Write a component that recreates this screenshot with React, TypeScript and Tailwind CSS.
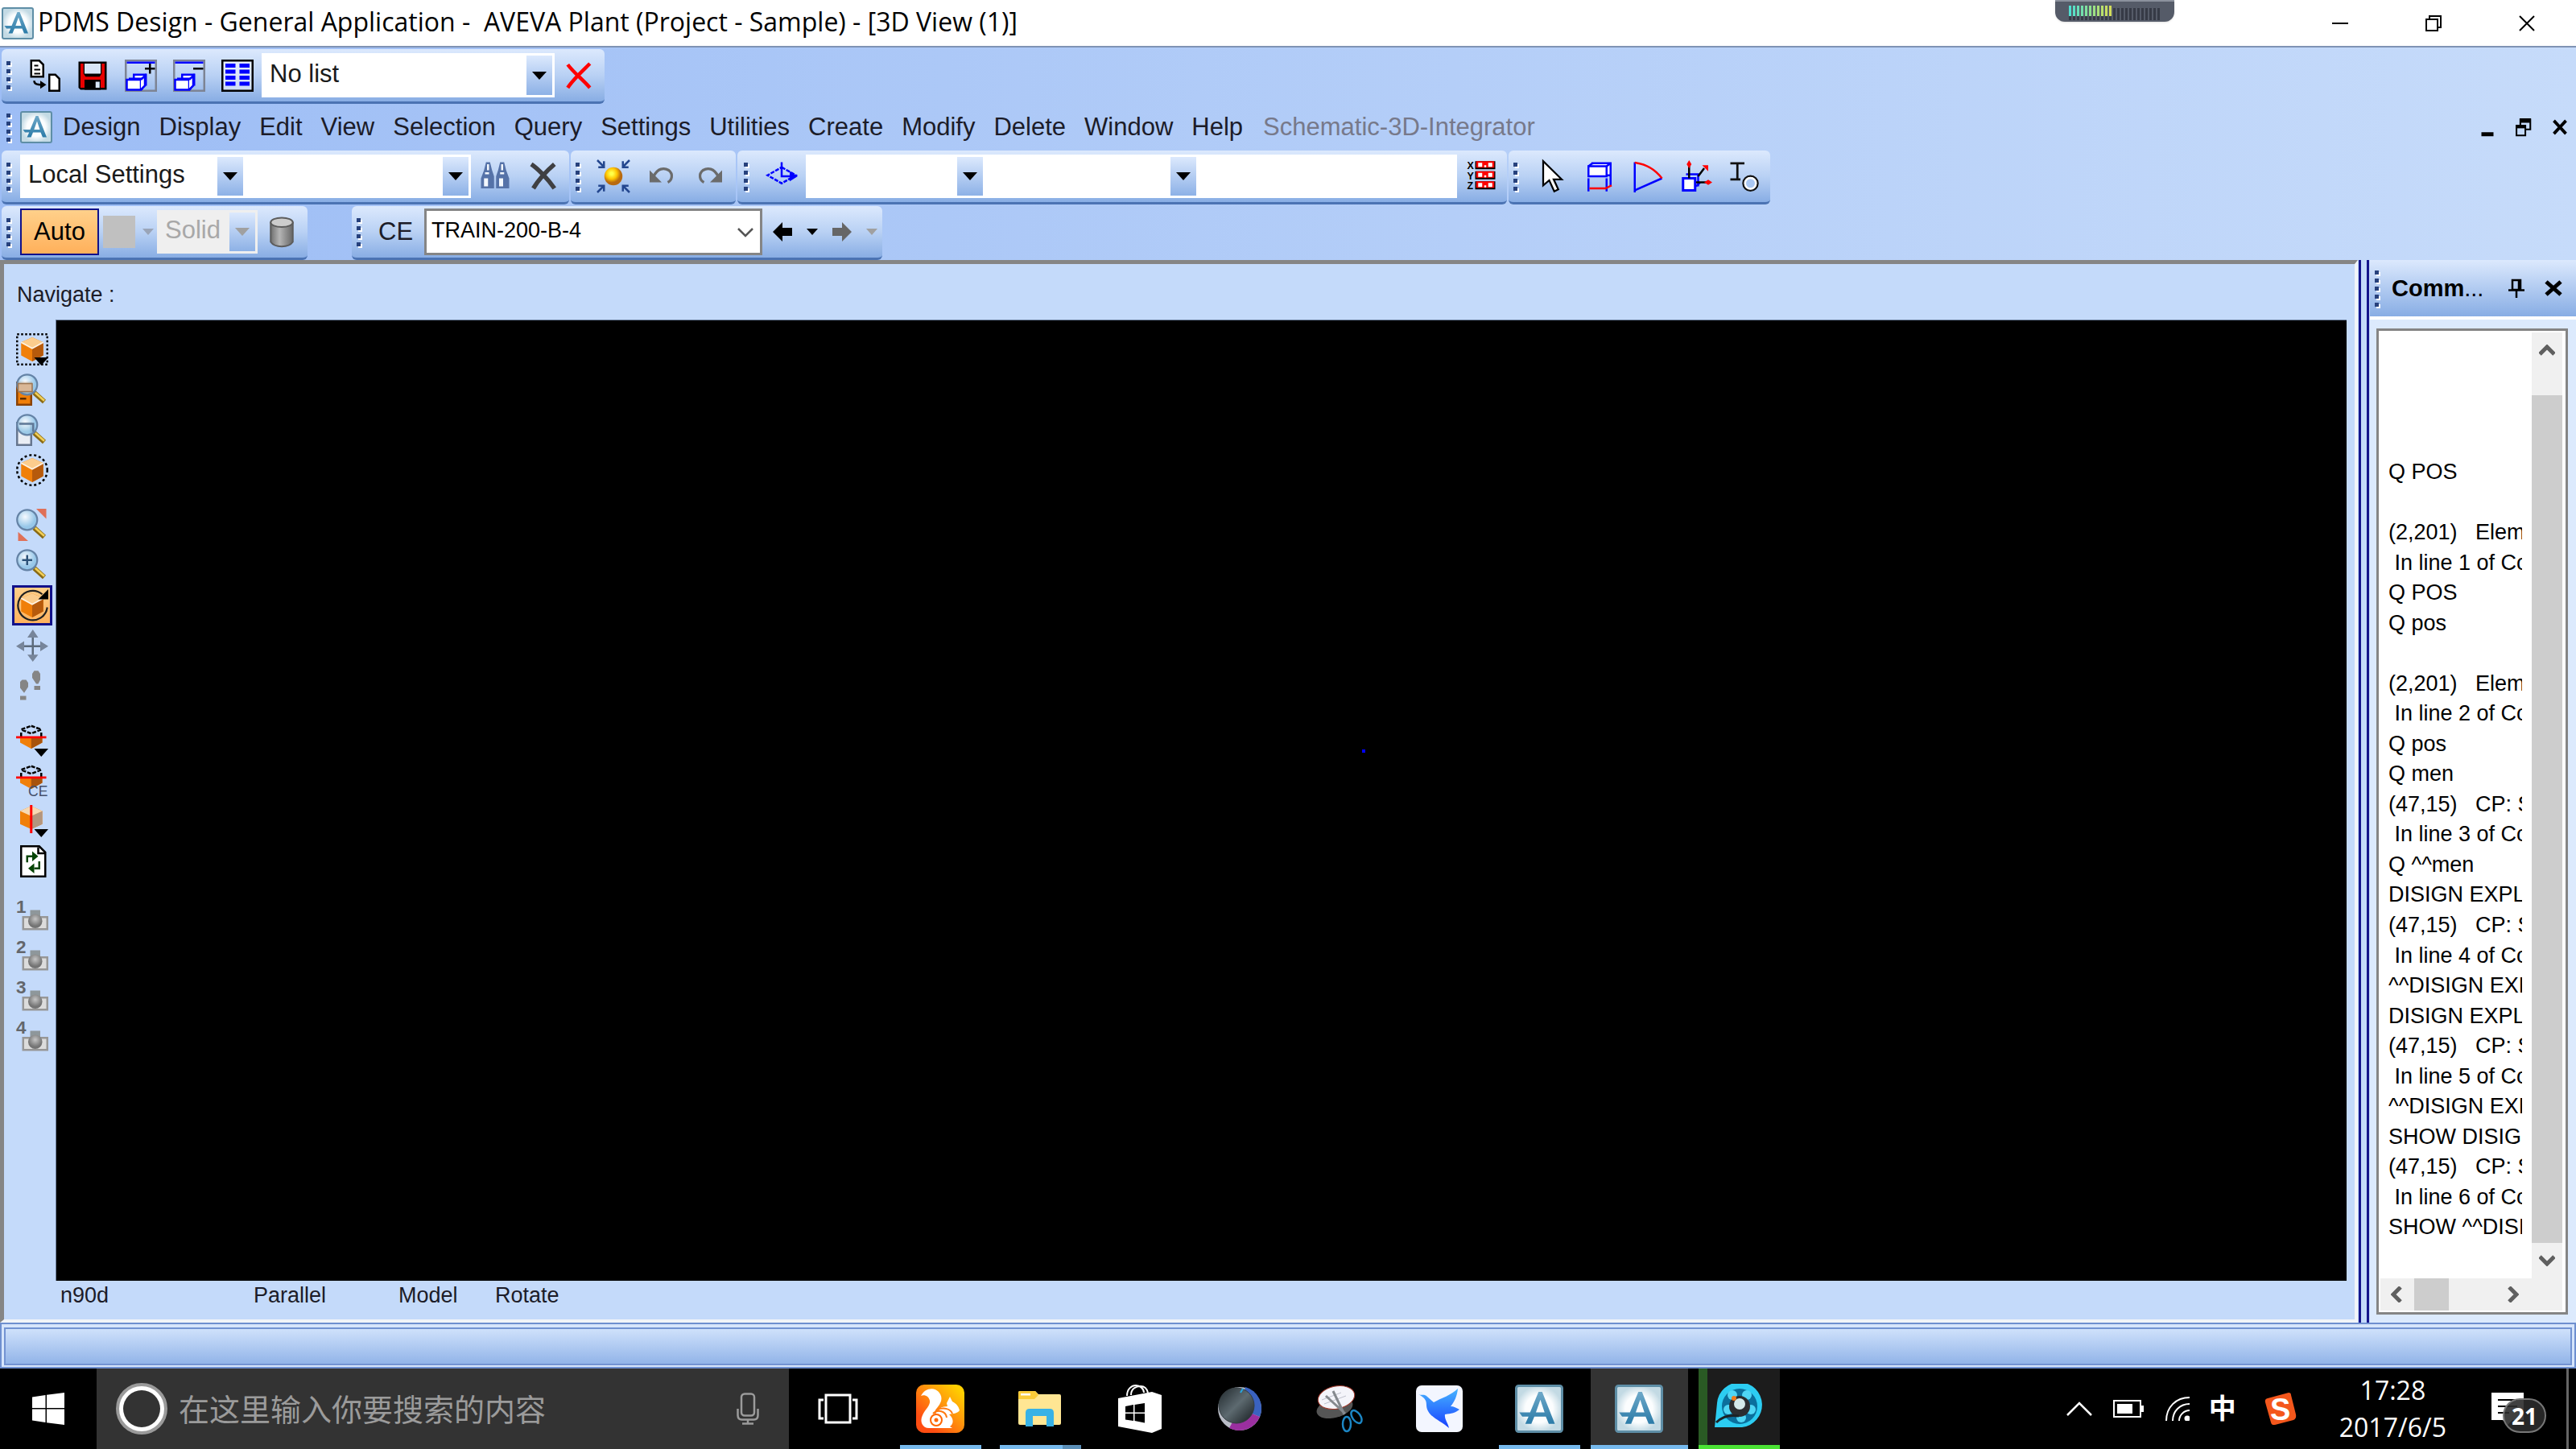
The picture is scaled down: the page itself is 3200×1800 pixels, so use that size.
import type { ReactNode } from "react";

const menuItems = [
  "Design",
  "Display",
  "Edit",
  "View",
  "Selection",
  "Query",
  "Settings",
  "Utilities",
  "Create",
  "Modify",
  "Delete",
  "Window",
  "Help",
];

const commandLog = [
  "Q POS",
  "",
  "(2,201)   Element has no position",
  " In line 1 of Command Input",
  "Q POS",
  "Q pos",
  "",
  "(2,201)   Element has no position",
  " In line 2 of Command Input",
  "Q pos",
  "Q men",
  "(47,15)   CP: Syntax error",
  " In line 3 of Command Input",
  "Q ^^men",
  "DISIGN EXPLORER",
  "(47,15)   CP: Syntax error",
  " In line 4 of Command Input",
  "^^DISIGN EXPLORER",
  "DISIGN EXPLORER",
  "(47,15)   CP: Syntax error",
  " In line 5 of Command Input",
  "^^DISIGN EXPLORER",
  "SHOW DISIGN EXPLORER",
  "(47,15)   CP: Syntax error",
  " In line 6 of Command Input",
  "SHOW ^^DISIGN EXPLORER",
];

/* ---------- shared pieces ---------- */

function Icon({ children, className = "size-10" }: { children: ReactNode; className?: string }) {
  return (
    <svg viewBox="0 0 16 16" className={`${className} shrink-0 overflow-visible`} aria-hidden="true">
      {children}
    </svg>
  );
}

function Grip({ dots = 4 }: { dots?: number }) {
  return (
    <div className="flex w-[23px] shrink-0 flex-col gap-[5px] self-center pl-[6px]">
      {Array.from({ length: dots }, (_, i) => (
        <span key={i} className="h-[5px] w-[5px] bg-[#27417c] shadow-[2px_2px_0_white]" />
      ))}
    </div>
  );
}

function Toolbar({ children, className = "" }: { children: ReactNode; className?: string }) {
  return (
    <div
      className={`flex items-stretch rounded-md border-b-[3px] border-[#4b73b3] bg-linear-to-b from-[#dce9fd] via-[#b9d1f4] to-[#88ade4] pr-[2px] ${className}`}
    >
      <Grip />
      {children}
    </div>
  );
}

function ToolButton({ label, children }: { label: string; children: ReactNode }) {
  return (
    <button aria-label={label} className="flex w-[60px] items-center justify-center">
      <Icon>{children}</Icon>
    </button>
  );
}

function Combo({
  label,
  value = "",
  className,
  disabled = false,
}: {
  label: string;
  value?: string;
  className: string;
  disabled?: boolean;
}) {
  return (
    <div className={`relative my-[5px] flex ${className}`}>
      <select
        aria-label={label}
        disabled={disabled}
        className={`w-full appearance-none pb-1 pl-[10px] text-[31px] leading-9 ${
          disabled ? "bg-[#efefef] text-[#a8a8a8] opacity-100" : "bg-white text-[#1a1a1a]"
        }`}
      >
        <option>{value}</option>
      </select>
      <span className="pointer-events-none absolute inset-y-[3px] right-[3px] flex w-8 items-center justify-center bg-linear-to-b from-[#dce9fd] to-[#8db1e6]">
        <svg viewBox="0 0 18 10" className="w-[18px]" aria-hidden="true">
          <path d="M0 0h18L9 10z" fill={disabled ? "#a0a0a0" : "#000"} />
        </svg>
      </span>
    </div>
  );
}

function AvevaLogo({ className }: { className: string }) {
  return (
    <svg viewBox="0 0 40 40" className={`${className} shrink-0`} aria-hidden="true">
      <defs>
        <linearGradient id="aveva-a" x1="0" y1="0" x2="0" y2="1">
          <stop offset="0" stopColor="#6fa9c9" />
          <stop offset="1" stopColor="#2b7ba8" />
        </linearGradient>
        <radialGradient id="aveva-bg">
          <stop offset=".6" stopColor="#fbfdfe" />
          <stop offset="1" stopColor="#c3dae4" />
        </radialGradient>
      </defs>
      <rect x="1" y="1" width="38" height="38" rx="2" fill="url(#aveva-bg)" stroke="#5e8ea6" strokeWidth="2" />
      <path
        d="M19.500 6h3L33 32.500h-5l-2.500-6H16l-2.500 6H8.500l2.700-6H6L3.500 23h9zM21 12.500 17.300 23h7.200z"
        fill="url(#aveva-a)"
        fillRule="evenodd"
      />
    </svg>
  );
}

/* ---------- top of the window ---------- */

function TitleBar() {
  return (
    <header className="mb-[2px] flex h-[59px] items-center border-b-2 border-[#7f93b4] bg-white pl-[2px]">
      <AvevaLogo className="size-10" />
      <h1 className="pb-1 pl-[5px] font-['Open_Sans',sans-serif] text-[32px] leading-10 whitespace-pre text-black">
        PDMS Design - General Application -  AVEVA Plant (Project - Sample) - [3D View (1)]
      </h1>
      <div className="mr-[148px] ml-auto flex h-full items-start">
        <div className="flex h-[27px] w-[148px] justify-center rounded-b-xl border-t-2 border-[#8b919d] bg-[#555b68] pt-1 shadow">
          <svg viewBox="0 0 114 20" className="h-5 w-[114px]" aria-hidden="true">
            {Array.from({ length: 23 }, (_, i) => (
              <rect key={i} x={i * 5} y={i < 11 ? 13 : 4} width="3" height={i < 11 ? 6 : 15} fill="#363a46" />
            ))}
            {["#4fe0d0", "#5ae0c4", "#66e0b8", "#72e0ac", "#80e09e", "#8ee090", "#9ce084", "#aae078", "#b8e06c", "#c6de62", "#d2dc5a"].map(
              (fill, i) => (
                <rect key={fill} x={i * 5} y="1" width="3" height="13" fill={fill} />
              )
            )}
          </svg>
        </div>
      </div>
      <div className="flex h-full pr-[3px]">
        <button aria-label="Minimize" className="flex w-[116px] items-center justify-center">
          <svg viewBox="0 0 20 20" className="size-5" aria-hidden="true">
            <path d="M0 10h20" stroke="#000" strokeWidth="2" />
          </svg>
        </button>
        <button aria-label="Restore" className="flex w-[116px] items-center justify-center">
          <svg viewBox="0 0 20 20" className="size-5" fill="none" stroke="#000" strokeWidth="2" aria-hidden="true">
            <path d="M1 5h14v14H1zM5 5V1h14v14h-4" />
          </svg>
        </button>
        <button aria-label="Close" className="flex w-[116px] items-center justify-center">
          <svg viewBox="0 0 20 20" className="size-5" stroke="#000" strokeWidth="2" aria-hidden="true">
            <path d="M1 1l18 18M19 1L1 19" />
          </svg>
        </button>
      </div>
    </header>
  );
}

function WindowStack({ sign }: { sign: ReactNode }) {
  return (
    <>
      <path d="M.5.5h15v15H.5z" fill="none" stroke="#7d8494" />
      <path d="M1 1.500h14" stroke="#00f" />
      {sign}
      <path d="M4.500 7.500h6v5h-6zM2.500 9.500h6v5h-6z" fill="#fff" stroke="#00f" strokeWidth="1" />
      <path d="M1 10h7v5H1z" fill="#fff" stroke="#00f" strokeWidth="1" />
      <path d="M8 10l2-2v5l-2 2" fill="#fff" stroke="#00f" strokeWidth="1" />
    </>
  );
}

function MainToolbar() {
  return (
    <Toolbar className="ml-[2px] h-[68px] self-start">
      <ToolButton label="Get work">
        <path d="M1.500.5h4l2 2v6h-6z" fill="#fff" stroke="#000" />
        <path d="M3 3h2M3 5h3M3 7h3" stroke="#000" strokeWidth=".8" />
        <path d="M10.500 7.500h3l2 2v6h-5z" fill="#fff" stroke="#000" />
        <path d="M3 10.500c0 1.500 1 2 4 2" fill="none" stroke="#000" />
        <path d="M6 10.500l3 2-3 2z" />
      </ToolButton>
      <ToolButton label="Save work">
        <path d="M1 1h14v14H2l-1-1z" fill="#000" />
        <path d="M2 2h1.500v5l1 1.500h7l1-1.500V2H14v12H2z" fill="#e80000" />
        <path d="M4 2h8v5H4z" fill="#d9e6f8" />
        <path d="M4 10h8v5H4z" />
        <path d="M9.500 11h2v3h-2z" fill="#d9e6f8" />
      </ToolButton>
      <ToolButton label="Add to list">
        <WindowStack sign={<path d="M12.500 2v5M10 4.500h5" stroke="#000" />} />
      </ToolButton>
      <ToolButton label="Remove from list">
        <WindowStack sign={<path d="M10 4.500h5" stroke="#000" />} />
      </ToolButton>
      <ToolButton label="Edit list">
        <path d="M.5.500h15v15H.5z" fill="#fff" fillOpacity=".5" stroke="#000" />
        {[2, 5, 8, 11].map((y) => (
          <path key={y} d={`M2 ${y}h5v2H2zM9 ${y}h5v2H9z`} fill="#00f" />
        ))}
      </ToolButton>
      <Combo label="Current list" value="No list" className="w-[364px]" />
      <ToolButton label="Clear list">
        <path d="M2.500 2.500c3 4 7 7 11 11.500M13.500 2C10 5.500 5 10 2.500 14" fill="none" stroke="#f00" strokeWidth="1.800" />
      </ToolButton>
    </Toolbar>
  );
}

function MenuBar() {
  return (
    <nav className="flex h-[58px] items-center pl-[2px]">
      <Grip />
      <AvevaLogo className="size-10" />
      <div className="flex grow gap-[23px] pl-[13px] text-[31px] leading-9 text-[#1c1c28]">
        {menuItems.map((item) => (
          <button key={item}>{item}</button>
        ))}
        <button disabled className="pl-[2px] text-[#77798a]">
          Schematic-3D-Integrator
        </button>
      </div>
      <div className="flex items-center gap-[24px] pr-[10px]">
        <button aria-label="Minimize view">
          <Icon className="size-5">
            <path d="M2 13h12v4H2z" />
          </Icon>
        </button>
        <button aria-label="Restore view">
          <Icon className="size-[22px]">
            <path d="M5 1h9v9H5z" fill="none" stroke="#000" strokeWidth="1.500" />
            <path d="M4.500 0h10v4h-10z" />
            <path d="M1.500 6.500h8v9h-8z" fill="#c4dafa" stroke="#000" strokeWidth="1.500" />
            <path d="M1 6h9v3H1z" />
          </Icon>
        </button>
        <button aria-label="Close view">
          <Icon className="size-5">
            <path d="M2 1.500l12 13M14 1.500l-12 13" stroke="#000" strokeWidth="3" />
          </Icon>
        </button>
      </div>
    </nav>
  );
}

function SettingsToolbars() {
  return (
    <div className="flex h-[67px] gap-[2px] pl-[2px]">
      <Toolbar>
        <Combo label="Settings scope" value="Local Settings" className="w-[280px]" />
        <Combo label="Search text" className="w-[280px]" />
        <ToolButton label="Find">
          <path d="M3.500 1h2l1 4 1 3v6H1V9l1.500-4zM10.500 1h2l1 4L15 9v5H8.500V8l1-3z" fill="#5572a8" />
          <path d="M4 2h1v3H4zM11 2h1v3h-1zM2.500 9h2v4h-2zM10 9h2v4h-2zM3 6h2v1H3zM10.500 6h2v1h-2z" fill="#f3f7fd" />
        </ToolButton>
        <ToolButton label="Clear">
          <path d="M2 2c3 2 8 7 11.500 12M13.500 2C10 5 6 9 3 14" fill="none" stroke="#3f3f42" strokeWidth="2.200" />
        </ToolButton>
      </Toolbar>
      <Toolbar>
        <ToolButton label="Centre on element">
          <defs>
            <radialGradient id="ball" cx=".4" cy=".35">
              <stop offset=".15" stopColor="#ffff4a" />
              <stop offset=".6" stopColor="#ffc400" />
              <stop offset="1" stopColor="#b86a10" />
            </radialGradient>
          </defs>
          <circle cx="8" cy="8" r="4.500" fill="url(#ball)" />
          <path d="M0 0l3 3M16 0l-3 3M0 16l3-3M16 16l-3-3M3.300.500v3H.5M12.700.5v3h2.800M.5 12.700h2.800v2.800M15.500 12.700h-2.800v2.800" fill="none" stroke="#24478f" />
        </ToolButton>
        <ToolButton label="Undo">
          <path d="M2 5v6h6z" fill="#6b6b6b" />
          <path d="M4 8c2-4 5-4.500 7.500-3 2.500 2 1.500 5-.5 6" fill="none" stroke="#6b6b6b" strokeWidth="1.300" />
        </ToolButton>
        <ToolButton label="Redo">
          <path d="M14 5v6H8z" fill="#6b6b6b" />
          <path d="M12 8c-2-4-5-4.500-7.500-3-2.500 2-1.500 5 .5 6" fill="none" stroke="#6b6b6b" strokeWidth="1.300" />
        </ToolButton>
      </Toolbar>
      <Toolbar className="pl-[2px]">
        <ToolButton label="Working plane">
          <path d="M8 3.500l7 4-7 4-7-4z" fill="none" stroke="#00f" strokeDasharray="2 .6" />
          <path d="M8 1v7h5" fill="none" stroke="#00f" />
          <path d="M12 5.500l4 2.500-4 2.500z" fill="#00f" />
        </ToolButton>
        <Combo label="Position" className="w-[223px]" />
        <Combo label="Axis" className="w-[265px]" />
        <input aria-label="Coordinate" className="my-[5px] w-[321px] bg-white px-[10px] text-[31px]" />
        <ToolButton label="Position readout">
          {["X", "Y", "Z"].map((axis, i) => (
            <g key={axis}>
              <text x="1" y={4.5 + i * 5} fontSize="5" fontWeight="bold">
                {axis}
              </text>
              <path d={`M5 ${0.5 + i * 5}h10v4H5z`} fill="#000" />
              <path d={`M5.500 ${0.5 + i * 5}h9v3.200h-9z`} fill="#f00" />
              <path d={`M6.500 ${1.3 + i * 5}h2v2h-2zM11.500 ${1.3 + i * 5}h2v2h-2zM9.500 ${2.5 + i * 5}h1v1h-1z`} fill="#fff" />
            </g>
          ))}
        </ToolButton>
      </Toolbar>
      <Toolbar>
        <ToolButton label="Select">
          <path d="M4 .5v12l3-2.500 2.500 5.500 2-1-2.300-5h4z" fill="#fff" stroke="#000" strokeWidth=".9" />
        </ToolButton>
        <ToolButton label="Measure distance">
          <path d="M4 1.500h9.500v6H12M2.500 3h9v5h-9z" fill="#fff" stroke="#00f" />
          <path d="M2.500 3l2-1.500M11.500 3l2-1.500" stroke="#00f" />
          <path d="M2.500 9v6.500M11.500 9v6.500M13.500 8v5" stroke="#00f" />
          <path d="M3 14h8l3-1.500" fill="none" stroke="#f00" />
        </ToolButton>
        <ToolButton label="Measure angle">
          <path d="M1.500 1v15M1.500 15L15 9" stroke="#00f" fill="none" />
          <path d="M1.500 1.200C8 2 12 5 15 9" fill="none" stroke="#f00" />
        </ToolButton>
        <ToolButton label="Move handle">
          <path d="M3 7h6v6M8 13l2-2" fill="none" stroke="#00f" />
          <path d="M1.500 9h6v6h-6z" fill="#fff" stroke="#00f" strokeWidth="1.200" />
          <path d="M4.500 9V2M8 11h6M9 8l3-4" stroke="#000" fill="none" />
          <path d="M4.500 0l1.200 2-1.200 2-1.200-2zM16 11l-2 1.300-2-1.300 2-1.300zM11 2.500h3v3z" fill="#f00" />
        </ToolButton>
        <ToolButton label="Model editor">
          <path d="M1 1.500h7M4.500 1.500v8M1 9.500h5" fill="none" stroke="#111" strokeWidth="1.100" />
          <circle cx="11" cy="11.500" r="3.600" fill="#aac8f4" stroke="#111" />
          <circle cx="11" cy="11.500" r="2.700" fill="none" stroke="#fff" />
        </ToolButton>
      </Toolbar>
    </div>
  );
}

function SmallTriangle({ fill }: { fill: string }) {
  return (
    <svg viewBox="0 0 14 8" className="w-[14px]" aria-hidden="true">
      <path d="M0 0h14L7 8z" fill={fill} />
    </svg>
  );
}

function DisplayToolbars() {
  return (
    <div className="mt-[2px] flex h-[67px] gap-[55px] pl-[2px]">
      <Toolbar>
        <button className="my-[3px] w-[98px] border-2 border-[#11118a] bg-linear-to-b from-[#ffd08a] to-[#ffb05a] text-[31px] leading-9">
          Auto
        </button>
        <button disabled aria-label="Colour" className="flex w-[72px] items-center gap-[9px] pl-[5px]">
          <span className="size-10 bg-[#c0c0c0]" />
          <SmallTriangle fill="#9aa5b8" />
        </button>
        <Combo label="Fill style" value="Solid" className="w-[125px]" disabled />
        <ToolButton label="Cylinder">
          <defs>
            <linearGradient id="cyl">
              <stop offset="0" stopColor="#6f6f6f" />
              <stop offset=".4" stopColor="#b5b5b5" />
              <stop offset="1" stopColor="#666" />
            </linearGradient>
          </defs>
          <path d="M2.500 3.500v9.500c2 3 9 3 11 0V3.500z" fill="url(#cyl)" stroke="#5c5c5c" strokeWidth=".8" />
          <ellipse cx="8" cy="3.300" rx="5.500" ry="2.300" fill="#ccc" stroke="#5c5c5c" strokeWidth=".8" />
        </ToolButton>
      </Toolbar>
      <Toolbar>
        <label htmlFor="ce" className="w-[67px] self-center pl-[10px] text-[31px] leading-9 text-[#1c1c28]">
          CE
        </label>
        <div className="relative my-[3px] flex w-[420px]">
          <select id="ce" className="w-full appearance-none border-[3px] border-[#858585] bg-white pb-1 pl-[6px] text-[27px] leading-9">
            <option>TRAIN-200-B-4</option>
          </select>
          <svg
            viewBox="0 0 20 12"
            className="pointer-events-none absolute top-[24px] right-[11px] w-5"
            fill="none"
            stroke="#555"
            strokeWidth="2.500"
            aria-hidden="true"
          >
            <path d="M1 1l9 9 9-9" />
          </svg>
        </div>
        <button aria-label="Back" className="flex w-[74px] items-center gap-[18px] pl-[13px]">
          <svg viewBox="0 0 24 24" className="size-6" aria-hidden="true">
            <path d="M0 12L12 0v7h12v10H12v7z" />
          </svg>
          <SmallTriangle fill="#000" />
        </button>
        <button disabled aria-label="Forward" className="flex w-[73px] items-center gap-[18px] pl-[13px]">
          <svg viewBox="0 0 24 24" className="size-6" aria-hidden="true">
            <path d="M24 12L12 0v7H0v10h12v7z" fill="#666" />
          </svg>
          <SmallTriangle fill="#a0a0a0" />
        </button>
      </Toolbar>
    </div>
  );
}

/* ---------- view tool strip ---------- */

function Box() {
  return (
    <>
      <path d="M8 2l5.500 2.500v6.500L8 14l-5.500-3V4.500z" fill="#f07f09" />
      <path d="M8 7.500l5.500-3V11L8 14z" fill="#b65a0c" />
      <path d="M8 2l5.500 2.500L8 7.500l-5.500-3z" fill="#fccd8d" />
      <path d="M2.500 4.500l5.500 3 5.500-3" fill="none" stroke="#fff3e2" strokeWidth=".7" />
    </>
  );
}

function Lens() {
  return (
    <>
      <defs>
        <radialGradient id="lens" cx=".4" cy=".35">
          <stop offset="0" stopColor="#fff" />
          <stop offset="1" stopColor="#8fc4e6" />
        </radialGradient>
      </defs>
      <path d="M9 9.500l5 4.500" stroke="#8a6a14" strokeWidth="2.400" />
      <path d="M9.500 9.500l4.500 4" stroke="#f1cf58" strokeWidth="1.100" />
      <circle cx="5.500" cy="5.500" r="5" fill="url(#lens)" fillOpacity=".85" stroke="#6583a6" strokeWidth=".9" />
    </>
  );
}

function CutBox() {
  return (
    <>
      <path d="M2 6.500h11V9l-5.500 3L2 9z" fill="#f07f09" />
      <path d="M7.500 6.500H13V9l-5.500 3z" fill="#a8540c" />
      <path d="M7.500.7L12.500 2.500l-5 2-5-2zM2.500 4v2M12.500 4v2" fill="none" stroke="#000" strokeDasharray="2 .7" />
      <path d="M0 6.300h15" stroke="#f00" strokeWidth="1.100" />
    </>
  );
}

function Camera({ slot }: { slot: number }) {
  return (
    <>
      <defs>
        <radialGradient id="cam" cx=".5" cy=".35">
          <stop offset="0" stopColor="#c4c4c4" />
          <stop offset="1" stopColor="#747474" />
        </radialGradient>
      </defs>
      <text x="0" y="6.500" fontSize="9" fontWeight="bold" fill="#63666c">
        {slot}
      </text>
      <path d="M7 5h5v3H7z" fill="#8e979b" />
      <path d="M3.500 8.500h12v6h-12z" fill="#dcdcdc" stroke="#979797" />
      <circle cx="9.500" cy="10.500" r="3.500" fill="url(#cam)" />
    </>
  );
}

const corner = <path d="M9 12h7l-3.500 4z" fill="#000" />;

const viewTools = [
  [
    {
      label: "Limits box",
      art: (
        <>
          <path d="M.5.500h15v15H.5z" fill="none" stroke="#000" strokeDasharray="1 1" />
          <Box />
          {corner}
        </>
      ),
    },
    {
      label: "Zoom to element",
      art: (
        <>
          <path d="M.5 4.500h7v11h-7z" fill="#f07f09" stroke="#8a4306" />
          <path d="M2 12.500h3" stroke="#5d2c00" />
          <Lens />
          <path d="M1 5h7v4H1z" fill="#d9b797" stroke="#9c7450" strokeWidth=".6" />
        </>
      ),
    },
    {
      label: "Zoom to selection",
      art: (
        <>
          <path d="M.5 4.500h7v11h-7z" fill="#e9edf4" stroke="#66768f" />
          <Lens />
          <path d="M1.500 5h7v4" fill="none" stroke="#5f7897" />
        </>
      ),
    },
    {
      label: "Limits sphere",
      art: (
        <>
          <circle cx="8" cy="8" r="7.500" fill="none" stroke="#000" strokeDasharray="1.200 1.200" />
          <Box />
        </>
      ),
    },
  ],
  [
    {
      label: "Zoom extents",
      art: (
        <>
          <path d="M10 0h5v5zM1 11.500v4.500h5z" fill="#df7058" />
          <Lens />
        </>
      ),
    },
    {
      label: "Zoom in",
      art: (
        <>
          <Lens />
          <path d="M5.500 3v5M3 5.500h5" stroke="#2d5379" />
        </>
      ),
    },
    {
      label: "Rotate",
      active: true,
      art: (
        <>
          <path d="M13 2.500A7.300 7.300 0 1 0 15.500 9" fill="none" stroke="#222" strokeWidth=".9" />
          <Box />
          <path d="M16 0v5h-5z" />
        </>
      ),
    },
    {
      label: "Pan",
      art: (
        <>
          <path d="M8.300 2v12M2 8.300h12.500" stroke="#5d6b7c" />
          <path d="M8.300 0l2.700 4H5.600zM8.300 16L5.600 12.500H11zM0 8.300l4-2.500v5zM16 8.300l-4-2.500v5z" fill="#77859a" />
        </>
      ),
    },
    {
      label: "Walk",
      art: <path d="M9 .5h2l1 1.500v3l-1 2h-1L8 4V2zM9 8h3v2H9zM3 5h2l1 1.500v2L4 11.500 2 9V6zM2 13h3v2H2z" fill="#858585" />,
    },
  ],
  [
    {
      label: "Clip view",
      art: (
        <>
          <CutBox />
          {corner}
        </>
      ),
    },
    {
      label: "Clip to current element",
      art: (
        <>
          <CutBox />
          <text x="6" y="15.500" fontSize="7" fill="#44506a">
            CE
          </text>
        </>
      ),
    },
    {
      label: "Section plane",
      art: (
        <>
          <path d="M7.500.5L13 3v6.500L7.500 12 2 9.500V3z" fill="#f07f09" />
          <path d="M7.500 5.500L13 3v6.500L7.500 12z" fill="#b2967f" />
          <path d="M7.500.5L13 3 7.500 5.500 2 3z" fill="#f6d9b4" />
          <path d="M7.500 0v14" stroke="#f00" strokeWidth="1.200" />
          {corner}
        </>
      ),
    },
    {
      label: "Refresh",
      art: (
        <>
          <path d="M2.500.5h9l3 3v12h-12z" fill="#fff" stroke="#000" />
          <path d="M11 1v3h3" fill="none" stroke="#000" />
          <path d="M5.500 8.500V5.500H8M11.500 8v3.500H9" fill="none" stroke="#044404" />
          <path d="M8 3l3 2.500L8 8zM9 9l-3 2.500L9 14z" fill="#044404" />
        </>
      ),
    },
  ],
  [1, 2, 3, 4].map((slot) => ({ label: `Saved view ${slot}`, art: <Camera slot={slot} /> })),
] as { label: string; art: ReactNode; active?: boolean }[][];

function ViewTools() {
  return (
    <div className="flex w-[64px] shrink-0 flex-col gap-[18px] pt-[12px] pl-[10px]">
      {viewTools.map((group) => (
        <div key={group[0].label} className="flex flex-col">
          {group.map((tool) => (
            <button
              key={tool.label}
              aria-label={tool.label}
              className={`flex size-[50px] items-center justify-center ${
                tool.active ? "border-[3px] border-[#11118a] bg-linear-to-b from-[#ffcf88] to-[#ffb25e]" : ""
              }`}
            >
              <Icon>{tool.art}</Icon>
            </button>
          ))}
        </div>
      ))}
    </div>
  );
}

function ModelView() {
  return (
    <section className="flex min-w-0 grow flex-col border-t-[5px] border-r-4 border-b-4 border-l-[5px] border-t-[#858585] border-r-[#f1f4f8] border-b-[#f1f4f8] border-l-[#858585] bg-[#c4dafa] text-[27px] text-[#1c1c28]">
      <p className="flex h-[69px] items-center pt-[6px] pl-4 leading-8">Navigate :</p>
      <div className="flex min-h-0 grow pr-[10px]">
        <ViewTools />
        <div className="relative grow border-t border-l border-[#6c7f9c] bg-black">
          <span className="absolute top-9/20 left-[57%] size-1 -translate-y-1 bg-[#0000ff]" />
        </div>
      </div>
      <div className="flex h-[48px] pt-[2px] pl-[70px] leading-8">
        <span className="w-[240px]">n90d</span>
        <span className="w-[180px]">Parallel</span>
        <span className="w-[120px]">Model</span>
        <span>Rotate</span>
      </div>
    </section>
  );
}

/* ---------- command window ---------- */

function Chevron({ className }: { className: string }) {
  return (
    <svg viewBox="0 0 20 14" className={`h-[14px] w-5 ${className}`} aria-hidden="true">
      <path d="M1 12l9-9 9 9" fill="none" stroke="#5f5f5f" strokeWidth="5" />
    </svg>
  );
}

function CommandWindow() {
  return (
    <aside className="flex w-[256px] shrink-0 flex-col bg-[#dceafd]">
      <div className="flex h-[74px] items-center border-b-4 border-white bg-linear-to-b from-[#dce9fd] to-[#88ade4]">
        <Grip dots={5} />
        <h2 className="grow pl-[4px] text-[29px] leading-9">
          <b>Comm</b>...
        </h2>
        <button aria-label="Pin" className="mr-[25px]">
          <svg viewBox="0 0 20 24" className="h-6 w-5" fill="none" stroke="#000" strokeWidth="2.500" aria-hidden="true">
            <path d="M5 2h10v12H5zM0 14.500h20M10 14v10M13 2v12" />
          </svg>
        </button>
        <button aria-label="Close" className="mr-[17px]">
          <svg viewBox="0 0 22 20" className="h-5 w-[22px]" stroke="#000" strokeWidth="5" aria-hidden="true">
            <path d="M2 2l18 16M20 2L2 18" />
          </svg>
        </button>
      </div>
      <div className="mt-[11px] mr-[10px] mb-[10px] ml-[8px] flex min-h-0 grow flex-col border-[3px] border-[#858585] bg-white p-[2px] pr-[4px]">
        <div className="flex min-h-0 grow">
          <div className="flex min-w-0 grow flex-col overflow-hidden pt-[155px] pr-[12px] pb-[44px] pl-[10px] text-[27px] leading-9">
            {commandLog.map((line, i) => (
              <p key={i} className="min-h-0 flex-1 overflow-hidden whitespace-pre">
                {line}
              </p>
            ))}
          </div>
          <div className="flex w-[38px] shrink-0 flex-col items-center bg-[#f0f0f0] pt-[15px] pb-[15px]">
            <Chevron className="mb-[49px]" />
            <span className="w-full grow bg-[#cdcdcd]" />
            <Chevron className="mt-[15px] rotate-180" />
          </div>
        </div>
        <div className="flex h-[40px] items-center bg-[#f0f0f0] pl-[10px]">
          <Chevron className="-rotate-90" />
          <span className="ml-[12px] h-full w-[43px] bg-[#cdcdcd]" />
          <Chevron className="ml-[70px] rotate-90" />
        </div>
      </div>
    </aside>
  );
}

/* ---------- taskbar ---------- */

function TaskButton({
  label,
  children,
  line = "",
  active = false,
}: {
  label: string;
  children: ReactNode;
  line?: string;
  active?: boolean;
}) {
  return (
    <button aria-label={label} className="flex w-[124px] flex-col items-center">
      <span className={`flex grow items-center justify-center pt-[5px] ${active ? "w-[121px] bg-[#333]" : "w-[101px]"}`}>
        {children}
      </span>
      <span className={`h-[5px] ${active ? "w-[121px]" : "w-[101px]"} ${line}`} />
    </button>
  );
}

function TaskIcon({ children }: { children: ReactNode }) {
  return (
    <svg viewBox="0 0 60 60" className="size-[60px]" aria-hidden="true">
      {children}
    </svg>
  );
}

function Taskbar() {
  return (
    <footer className="flex h-[100px] shrink-0 items-stretch bg-black font-['Open_Sans','Noto_Sans_CJK_SC',sans-serif] text-white">
      <button aria-label="Start" className="flex w-[120px] items-center justify-center">
        <svg viewBox="0 0 40 40" className="size-10" aria-hidden="true">
          <path d="M0 5.500L16.500 3v16H0zM18 2.800L40 0v19H18zM0 20.500h16.500V37L0 34.500zM18 20.500h22V40l-22-2.800z" fill="#fff" />
        </svg>
      </button>
      <div className="flex w-[860px] items-center bg-[#333] pl-6">
        <span className="flex size-[64px] items-center justify-center rounded-full border-4 border-[#9a9a9a] bg-white">
          <span className="size-[46px] rounded-full bg-[#333]" />
        </span>
        <input
          aria-label="Search"
          placeholder="在这里输入你要搜索的内容"
          className="ml-[14px] min-w-0 grow bg-transparent text-[38px] leading-[50px] placeholder:text-[#9b9b9b]"
        />
        <button aria-label="Voice search" className="mr-[37px]">
          <svg viewBox="0 0 28 40" className="h-10 w-7" fill="none" stroke="#9b9b9b" strokeWidth="2.500" aria-hidden="true">
            <rect x="6" y="1.500" width="16" height="27" rx="4" />
            <path d="M1.500 20v8c0 4 2 5.500 5 5.500h15c3 0 5-1.500 5-5.500v-8M14 33v6M7 38.500h14" />
          </svg>
        </button>
      </div>
      <button aria-label="Task view" className="flex w-[126px] items-center justify-center pr-[5px]">
        <svg viewBox="0 0 50 38" className="h-[38px] w-[50px]" fill="none" stroke="#fff" strokeWidth="3" aria-hidden="true">
          <path d="M10 2h30v34H10zM7 8H2v23h5M43 8h5v23h-5" />
        </svg>
      </button>

      <TaskButton label="UC Browser" line="bg-[#76b9ed]">
        <TaskIcon>
          <defs>
            <linearGradient id="uc" x1="0" y1="1" x2="1" y2="0">
              <stop offset=".2" stopColor="#ff4d12" />
              <stop offset=".6" stopColor="#ff9a0c" />
              <stop offset=".9" stopColor="#ffd000" />
            </linearGradient>
          </defs>
          <rect x="0" y="0" width="60" height="60" rx="10" fill="url(#uc)" />
          <path
            d="M6 14C10 5 22 2 28 9c7 8 2 15-2 20-4 4-3 8-2 9 1-8 9-11 15-11l-1-4 4-8 3 6c6 3 8 7 9 11-2 4-9 4-13 5 6 5 6 12 1 15l3 2H16C8 54 4 46 8 38c3-7 10-12 9-18-1-5-6-8-11-6z"
            fill="#fff"
          />
          <circle cx="25" cy="44" r="7" fill="none" stroke="#f60" strokeWidth="2" />
          <circle cx="25" cy="44" r="2.500" fill="#f60" />
          <path d="M21 36c6-6 16-3 17 5M27 31c7-3 16-1 18 5" fill="none" stroke="#ff7a10" strokeWidth="2" />
        </TaskIcon>
      </TaskButton>
      <TaskButton label="File Explorer" line="bg-linear-to-r from-[#76b9ed] from-77% to-[#5b8fb8] to-77%">
        <TaskIcon>
          <path d="M3 10q0-2 2-2h19l4 4h26q2 0 2 2v34q0 2-2 2H5q-2 0-2-2z" fill="#ffe693" />
          <path d="M3 18v-8q0-2 2-2h19l4 5-5 5z" fill="#fbcc3a" />
          <path d="M6 11h12v2.500H6z" fill="#fff" />
          <path d="M12 52V35q0-5 5-5h25q5 0 5 5v17h-9V39H21v13z" fill="#38b2e6" />
        </TaskIcon>
      </TaskButton>
      <TaskButton label="Store">
        <TaskIcon>
          <path d="M3 17l42-8 12 4v42l-12 5L3 52z" fill="#fff" />
          <path d="M14 14C14 5 20 1 25 1s10 4 10 9M19 13c0-8 6-11 12-11s8 4 9 8" fill="none" stroke="#fff" strokeWidth="2" />
          <path d="M12 27l10-2v9.500H12zM23.500 25L36 23v11.500H23.500zM12 36h10v9l-10-1.500zM23.500 36H36v11.500L23.500 45z" />
        </TaskIcon>
      </TaskButton>
      <TaskButton label="Audio">
        <TaskIcon>
          <defs>
            <linearGradient id="knob" x1="0" y1="0" x2="1" y2="1">
              <stop offset="0" stopColor="#20282c" />
              <stop offset=".5" stopColor="#5d6a70" />
              <stop offset="1" stopColor="#151b1e" />
            </linearGradient>
          </defs>
          <circle cx="30" cy="30" r="27" fill="#b9bcc6" />
          <path d="M37 3A27.500 27.500 0 0 1 55 40L30 30z" fill="#3a62c0" />
          <path d="M55 40A27.500 27.500 0 0 1 17 54L30 30z" fill="#9b2fa0" />
          <circle cx="26" cy="26" r="22" fill="url(#knob)" stroke="#333c40" />
          <path d="M31 10l3-5" stroke="#26a7e0" strokeWidth="2" />
        </TaskIcon>
      </TaskButton>
      <TaskButton label="Snipping Tool">
        <TaskIcon>
          <ellipse cx="24" cy="29" rx="23" ry="12" fill="#555" transform="rotate(-15 24 29)" />
          <ellipse cx="26" cy="16" rx="23" ry="14" fill="#f4f4fa" stroke="#a33a2c" transform="rotate(-12 26 16)" />
          <path d="M8 19l24-9M11 24l27-10" stroke="#bfc0cc" />
          <path d="M13 14l24 22M22 8l14 29" stroke="#85898e" strokeWidth="3" />
          <ellipse cx="39" cy="49" rx="5" ry="9" fill="none" stroke="#1c86c4" strokeWidth="2.500" />
          <ellipse cx="51" cy="40" rx="5" ry="9" fill="none" stroke="#1c86c4" strokeWidth="2.500" transform="rotate(-35 51 40)" />
        </TaskIcon>
      </TaskButton>
      <TaskButton label="Thunder">
        <TaskIcon>
          <defs>
            <linearGradient id="bird" x1="0" y1="0" x2="0" y2="1">
              <stop offset="0" stopColor="#46b4ff" />
              <stop offset="1" stopColor="#1840ff" />
            </linearGradient>
          </defs>
          <rect x="1" y="1" width="58" height="58" rx="7" fill="#f3f6ff" />
          <path d="M4 12c5 2 7-1 11 3l8 7C32 17 45 13 53 5c-1 9-4 16-9 22 4 0 7 2 11 4-5 4-10 5-18 6-1 6 4 11 5 17C31 44 15 40 14 26c0-6-1-9-10-14z" fill="url(#bird)" />
        </TaskIcon>
      </TaskButton>
      <TaskButton label="AVEVA Plant monitor" line="bg-[#76b9ed]">
        <AvevaLogo className="size-[60px]" />
      </TaskButton>
      <TaskButton label="PDMS Design" line="bg-[#76b9ed]" active>
        <AvevaLogo className="size-[60px]" />
      </TaskButton>
      <button aria-label="Recorder" className="ml-[12px] flex w-[101px] flex-col">
        <span className="flex w-full grow items-center border-l-[11px] border-[#2a5a24] bg-[#1c1c1c] pt-[2px] pl-[9px]">
          <TaskIcon>
            <path d="M0 54L3 24A28 28 0 1 1 34 54z" fill="#2ccdf2" />
            <circle cx="31" cy="28" r="22" fill="#0b6f9c" />
            <g fill="#4fd6f5">
              <circle cx="22" cy="14" r="6" />
              <circle cx="40" cy="14" r="6" />
              <circle cx="17" cy="32" r="6" />
              <circle cx="45" cy="32" r="6" />
              <circle cx="33" cy="42" r="6" />
            </g>
            <circle cx="31" cy="28" r="13" fill="#2b2d30" />
            <circle cx="31" cy="25" r="7" fill="#d4e9ea" />
            <circle cx="24" cy="18" r="3" fill="#f07b1c" />
            <path d="M30 40C18 38 8 42 2 48" fill="none" stroke="#1b2226" strokeWidth="3" />
          </TaskIcon>
        </span>
        <span className="h-[5px] w-full bg-[#4be234]" />
      </button>

      <div className="ml-auto flex items-center">
        <button aria-label="Show hidden icons" className="mr-[26px]">
          <svg viewBox="0 0 32 18" className="h-[18px] w-8" fill="none" stroke="#fff" strokeWidth="2.500" aria-hidden="true">
            <path d="M1 17L16 2l15 15" />
          </svg>
        </button>
        <svg viewBox="0 0 38 22" className="mr-[27px] h-[22px] w-[38px]" aria-hidden="true">
          <path d="M1 1h33v20H1z" fill="none" stroke="#fff" strokeWidth="2" />
          <path d="M5 5h19v12H5zM35 7h3v8h-3z" fill="#fff" />
        </svg>
        <svg viewBox="0 0 30 30" className="mr-[24px] h-[30px] w-[30px]" fill="none" stroke="#fff" strokeWidth="2" aria-hidden="true">
          <path d="M1 30C1 13 13 1 30 1M9 30C9 18 18 9 30 9M17 30c0-7 6-13 13-13" />
          <circle cx="27" cy="27" r="2.500" fill="#fff" />
        </svg>
        <span className="mr-[35px] pb-[3px] text-[34px] leading-9 font-bold">中</span>
        <svg viewBox="0 0 40 40" className="mr-[53px] size-10" aria-hidden="true">
          <path d="M4 7L30 0q3 0 3 3l6 24q1 5-3 7L13 40q-4 1-5-3L1 12q-1-4 3-5z" fill="#f4571c" />
          <text x="7" y="34" fontSize="38" fontWeight="bold" fill="#fff" fontFamily="Liberation Sans">
            S
          </text>
        </svg>
        <div className="flex flex-col items-center gap-[6px] text-[32px] leading-10">
          <time>17:28</time>
          <time>2017/6/5</time>
        </div>
        <button aria-label="Notifications" className="relative ml-[56px] h-[60px] w-[68px]">
          <svg viewBox="0 0 40 40" className="size-10" aria-hidden="true">
            <path d="M0 0h40v34H26l-6 6-6-6H0z" fill="#fff" />
            <path d="M8 9h24M8 17h24M8 25h14" stroke="#000" strokeWidth="2" />
          </svg>
          <span className="absolute right-0 bottom-0 flex h-[43px] w-[54px] items-center justify-center rounded-full border-2 border-[#777] bg-[#2b2b2b]/90 text-[28px] leading-8 font-bold">
            21
          </span>
        </button>
        <span className="mr-[9px] ml-[25px] h-[100px] w-[3px] bg-[#666]" />
      </div>
    </footer>
  );
}

export default function App() {
  return (
    <div className="flex h-screen flex-col overflow-hidden bg-linear-to-r from-[#9dbdf5] to-[#c6dbfa] font-['Liberation_Sans',Arial,sans-serif] text-black">
      <TitleBar />
      <MainToolbar />
      <MenuBar />
      <SettingsToolbars />
      <DisplayToolbars />
      <main className="flex min-h-0 grow">
        <ModelView />
        <div className="mx-[1px] w-[13px] shrink-0 border-x-[3px] border-[#14148c] bg-[#c4dafa]" />
        <CommandWindow />
      </main>
      <div className="h-[57px] shrink-0 border-2 border-[#6e8fcf] bg-[#d6e5fb] px-[3px] pt-[4px] pb-[2px]">
        <div className="h-full border-2 border-[#7393d2] bg-linear-to-b from-[#cfe1fb] to-[#92b4e8]" />
      </div>
      <Taskbar />
    </div>
  );
}
